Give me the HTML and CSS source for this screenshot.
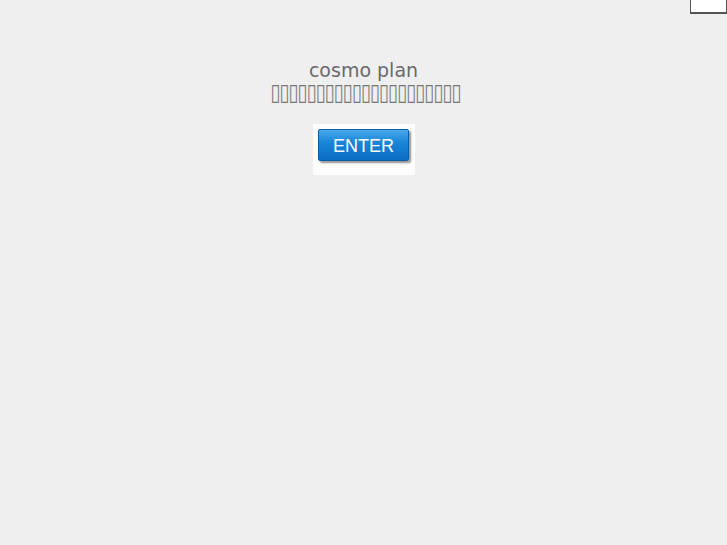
FILE: index.html
```html
<!DOCTYPE html>
<html>
<head>
<meta charset="utf-8">
<link rel="stylesheet" href="styles.css">
</head>
<body>
<div class="corner-box"></div>
<main class="intro">
  <h1 class="title">cosmo plan</h1>
  <p class="sub">▯▯▯▯▯▯▯▯▯▯▯▯▯▯▯▯▯▯▯▯▯</p>
  <div class="enter-frame">
    <a class="enter-btn" href="#">ENTER</a>
  </div>
</main>
</body>
</html>
```
FILE: styles.css
```css
html, body {
  margin: 0;
  padding: 0;
  background: #efefef;
}
body {
  width: 727px;
  height: 545px;
  overflow: hidden;
  position: relative;
  font-family: "DejaVu Sans", sans-serif;
}
.corner-box {
  position: absolute;
  top: -2px;
  right: 0;
  width: 35px;
  height: 13px;
  background: #ffffff;
  border: 1px solid #555;
  border-bottom-width: 2px;
}
.intro {
  display: flex;
  flex-direction: column;
  align-items: center;
  padding-top: 59px;
}
.title {
  margin: 0;
  font-weight: normal;
  font-size: 19px;
  line-height: 22px;
  color: #6a6a6a;
  text-align: center;
}
.sub {
  margin: 4px 0 0 4px;
  height: 14px;
  font-size: 18px;
  line-height: 14px;
  letter-spacing: -0.85px;
  transform: scaleY(1.3);
  color: #777;
}
.enter-frame {
  margin-top: 25px;
  width: 102px;
  height: 51px;
  background: #fdfdfd;
  display: flex;
  justify-content: center;
  padding-top: 5px;
  box-sizing: border-box;
}
.enter-btn {
  display: block;
  width: 91px;
  height: 32px;
  box-sizing: border-box;
  border-radius: 2px;
  border: 1px solid #0a5ea8;
  background: linear-gradient(#4aa8ea 0%, #1a86d8 40%, #0a6ec6 100%);
  box-shadow: 2px 2px 2px rgba(60, 60, 60, 0.55);
  color: #ffffff;
  font-family: "Liberation Sans", Arial, sans-serif;
  font-size: 18px;
  line-height: 33px;
  text-align: center;
  text-decoration: none;
}
```
